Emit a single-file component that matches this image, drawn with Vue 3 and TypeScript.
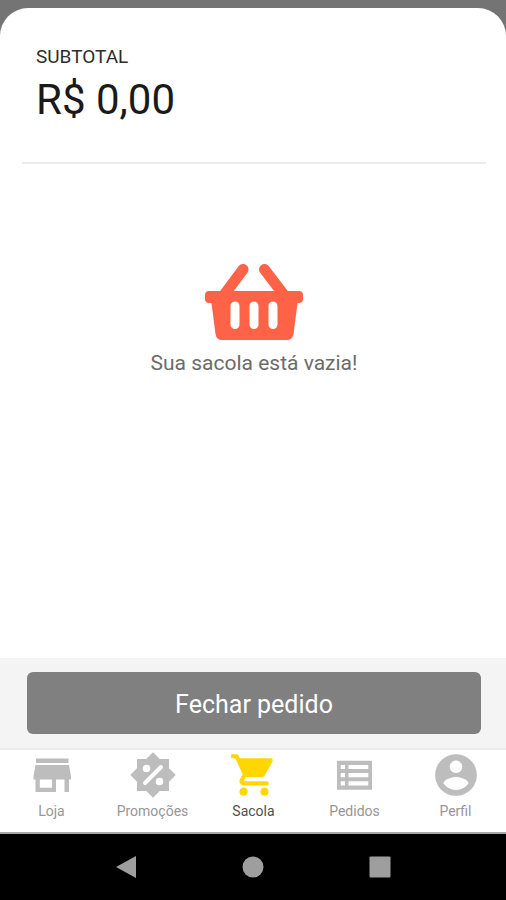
<script setup lang="ts">
import { ref } from 'vue'

type TabId = 'loja' | 'promocoes' | 'sacola' | 'pedidos' | 'perfil'

interface Tab {
  id: TabId
  label: string
}

const tabs: Tab[] = [
  { id: 'loja', label: 'Loja' },
  { id: 'promocoes', label: 'Promoções' },
  { id: 'sacola', label: 'Sacola' },
  { id: 'pedidos', label: 'Pedidos' },
  { id: 'perfil', label: 'Perfil' },
]

const active = ref<TabId>('sacola')
const subtotal = ref(0)

const formatPrice = (value: number): string => `R$ ${value.toFixed(2).replace('.', ',')}`
</script>

<template>
  <div class="screen">
    <main class="sheet">
      <header class="summary">
        <span class="summary-label">SUBTOTAL</span>
        <strong class="summary-value">{{ formatPrice(subtotal) }}</strong>
      </header>

      <section class="empty">
        <svg class="basket" viewBox="0 0 98 76" aria-hidden="true">
          <path d="M38 5.500L19 31M59.500 5.500L79 31" fill="none" stroke="#ff6347" stroke-width="11" stroke-linecap="round" />
          <path
            fill="#ff6347"
            fill-rule="evenodd"
            d="M4 27H94Q98 27 98 31V35Q98 39 94 39H92.500L88.500 70Q87.500 76 82 76H17Q11.500 76 10.500 70L6.500 39H4Q0 39 0 35V31Q0 27 4 27ZM25.500 42V60.500a4.500 4.500 0 0 0 9 0V42a4.500 4.500 0 0 0-9 0ZM44.500 42V60.500a4.500 4.500 0 0 0 9 0V42a4.500 4.500 0 0 0-9 0ZM63.500 42V60.500a4.500 4.500 0 0 0 9 0V42a4.500 4.500 0 0 0-9 0Z"
          />
        </svg>
        <p class="empty-text">Sua sacola está vazia!</p>
      </section>
    </main>

    <div class="checkout">
      <button class="checkout-button" type="button">Fechar pedido</button>
    </div>

    <nav class="tabs">
      <button
        v-for="tab in tabs"
        :key="tab.id"
        type="button"
        class="tab"
        :class="{ active: active === tab.id }"
        @click="active = tab.id"
      >
        <svg v-if="tab.id === 'loja'" class="tab-icon" viewBox="0 0 50 50" aria-hidden="true">
          <path
            fill-rule="evenodd"
            d="M9 8.500H41.500V13H9ZM8.500 15H42L44 26V29.500H42V42H37.500V29.500H29V42H8.500V29.500H6.500V26ZM12.800 29.500V37.700H25V29.500Z"
          />
        </svg>
        <svg v-else-if="tab.id === 'promocoes'" class="tab-icon" viewBox="0 0 50 50" aria-hidden="true">
          <path d="M25 2.300L31.700 9H41V18.300L47.700 25L41 31.700V41H31.700L25 47.700L18.300 41H9V31.700L2.300 25L9 18.300V9H18.300Z" />
          <circle class="cut" cx="18.500" cy="18.500" r="3.800" />
          <circle class="cut" cx="31.500" cy="31.500" r="3.800" />
          <path class="cut-line" d="M33 17L17 33" />
        </svg>
        <svg v-else-if="tab.id === 'sacola'" class="tab-icon" viewBox="0 0 24 24" aria-hidden="true">
          <path
            d="M7 18c-1.100 0-1.990.900-1.990 2S5.900 22 7 22s2-.900 2-2-.900-2-2-2zM1.500 2Q1 2 1 2.500V3.500Q1 4 1.500 4H3l3.600 7.590-1.350 2.450c-.160.280-.250.610-.250.960 0 1.100.900 2 2 2h11.400Q19 17 19 16.400V15.600Q19 15 18.400 15H7.420c-.140 0-.250-.110-.250-.250l.030-.120.900-1.630h7.450c.750 0 1.410-.410 1.750-1.030l3.580-6.490c.080-.140.120-.310.120-.480 0-.550-.450-1-1-1H5.210l-.700-1.500Q4.270 2 3.800 2H1.500zM17 18c-1.100 0-1.990.900-1.990 2s.890 2 1.990 2 2-.900 2-2-.900-2-2-2z"
          />
        </svg>
        <svg v-else-if="tab.id === 'pedidos'" class="tab-icon" viewBox="0 0 50 50" aria-hidden="true">
          <path
            fill-rule="evenodd"
            d="M7 10.700H42V39.700H7ZM10.700 15V19H15V15ZM18.500 15V19H38.300V15ZM10.700 23V27.200H15V23ZM18.500 23V27.200H38.300V23ZM10.700 31.200V35.400H15V31.200ZM18.500 31.200V35.400H38.300V31.200Z"
          />
        </svg>
        <svg v-else class="tab-icon" viewBox="0 0 24 24" aria-hidden="true">
          <path
            d="M12 2C6.480 2 2 6.480 2 12s4.480 10 10 10 10-4.480 10-10S17.520 2 12 2zm0 3c1.660 0 3 1.340 3 3s-1.340 3-3 3-3-1.340-3-3 1.340-3 3-3zm0 14.200c-2.500 0-4.710-1.280-6-3.220.030-1.990 4-3.080 6-3.080 1.990 0 5.970 1.090 6 3.080-1.290 1.940-3.500 3.220-6 3.220z"
          />
        </svg>
        <span class="tab-label">{{ tab.label }}</span>
      </button>
    </nav>

    <div class="system-bar">
      <button class="system-button" type="button" aria-label="Voltar">
        <svg viewBox="0 0 24 24" aria-hidden="true"><path d="M22 1V23L2 12Z" /></svg>
      </button>
      <button class="system-button" type="button" aria-label="Início">
        <svg viewBox="0 0 24 24" aria-hidden="true"><circle cx="12" cy="12" r="10.500" /></svg>
      </button>
      <button class="system-button" type="button" aria-label="Recentes">
        <svg viewBox="0 0 24 24" aria-hidden="true"><rect x="1.500" y="1.500" width="21" height="21" rx="1" /></svg>
      </button>
    </div>
  </div>
</template>

<style>
body {
  background: #747474;
}
</style>

<style scoped>
.screen {
  display: flex;
  flex-direction: column;
  box-sizing: border-box;
  min-height: 100vh;
  padding-top: 8px;
  background: #747474;
  font-family: Roboto, 'Liberation Sans', sans-serif;
}

button {
  margin: 0;
  padding: 0;
  border: 0;
  background: none;
  font-family: inherit;
  cursor: pointer;
}

.sheet {
  flex: 1;
  padding: 0 20px 0 22px;
  border-radius: 28px 28px 0 0;
  background: #fff;
}

.summary {
  display: flex;
  flex-direction: column;
  gap: 2px;
  padding: 36px 14px 34px;
  border-bottom: 2px solid #ececec;
}

.summary-label {
  color: #2c2c2c;
  font-size: 19px;
  line-height: 26px;
}

.summary-value {
  color: #1a1a1a;
  font-size: 42px;
  font-weight: 400;
  line-height: 56px;
}

.empty {
  display: flex;
  flex-direction: column;
  align-items: center;
  gap: 10px;
  padding-top: 100px;
}

.basket {
  width: 98px;
  height: 76px;
}

.empty-text {
  margin: 0;
  color: #6c6c6c;
  font-size: 21px;
  line-height: 26px;
}

.checkout {
  display: flex;
  padding: 14px 25px 14px 27px;
  background: #f4f4f4;
}

.checkout-button {
  flex: 1;
  height: 62px;
  padding-top: 2px;
  border-radius: 6px;
  background: #808080;
  color: #fff;
  font-size: 25px;
}

.tabs {
  display: grid;
  grid-template-columns: repeat(5, 1fr);
  padding: 0 0 10px 1px;
  border-top: 2px solid #ebebeb;
  border-bottom: 2px solid #a8a8a8;
  background: #fff;
}

.tab {
  display: flex;
  flex-direction: column;
  align-items: center;
  color: #969696;
}

.tab-icon {
  width: 50px;
  height: 50px;
  fill: #bdbdbd;
}

.active .tab-icon {
  fill: #ffd600;
}

.cut {
  fill: #fff;
}

.cut-line {
  fill: none;
  stroke: #fff;
  stroke-width: 4;
  stroke-linecap: round;
}

.tab-label {
  font-size: 14px;
  line-height: 22px;
}

.active .tab-label {
  color: #505050;
}

.system-bar {
  display: grid;
  grid-template-columns: repeat(3, 127px);
  justify-content: center;
  height: 66px;
  background: #000;
}

.system-button {
  display: flex;
  align-items: center;
  justify-content: center;
}

.system-button svg {
  width: 24px;
  height: 24px;
  fill: #9e9e9e;
}
</style>
